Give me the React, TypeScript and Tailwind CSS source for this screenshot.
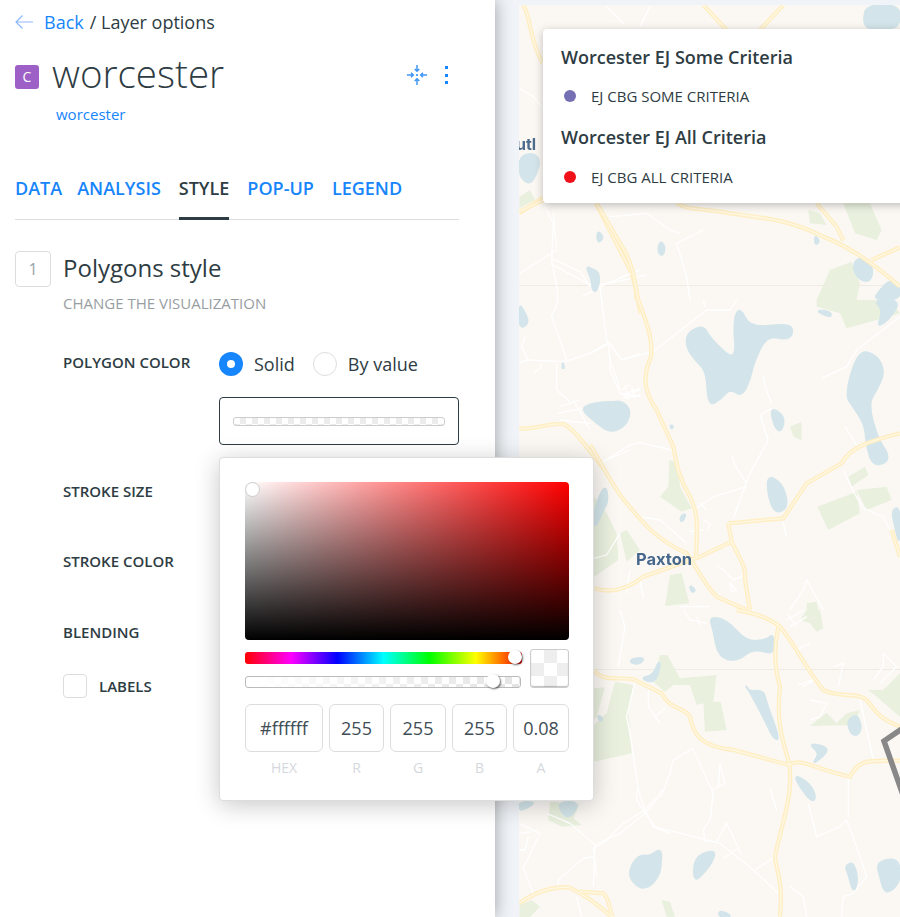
const ROAD_OUTER = '#ffeec3'
const ROAD_INNER = '#fff8e4'
const WATER = '#d3e5ea'
const GREEN = '#e9f0de'

interface CropShapes {
  x: number
  y: number
  water?: string[]
  green?: string[]
  minor?: string[]
  roads?: string[]
}

// map pieces, traced in 3x coordinates from an origin on the page
const MAP_PIECES: CropShapes[] = [
  {
    x: 490, y: 0,
    water: [
      'M1130 15 L1230 15 L1230 80 L1180 90 L1130 85 L1120 60 Z',
      'M88 470 L130 458 L150 480 L140 520 L120 555 L88 530 Z',
      'M325 692 L340 712 L328 728 L320 715 Z',
      'M510 722 L526 740 L518 770 L503 755 Z',
      'M290 800 L305 808 L325 815 L328 850 L315 875 L305 840 Z',
      'M1095 780 L1130 770 L1150 810 L1140 845 L1110 840 L1090 810 Z',
      'M1200 840 L1230 850 L1230 900 L1150 900 L1170 870 Z',
      'M975 705 L990 725 L975 735 Z',
    ],
    green: [
      'M955 630 L990 640 L1010 675 L960 670 Z',
      'M1060 610 L1140 610 L1175 690 L1160 720 L1095 700 Z',
      'M1020 810 L1085 785 L1110 850 L1100 900 L980 900 Z',
      'M88 590 L120 570 L135 600 L88 625 Z',
    ],
    minor: [
      'M88 265 L130 290 L155 320',
      'M640 690 L560 730 L590 830 L600 900',
      'M360 650 L470 640 L540 690 L570 700',
      'M190 640 L200 750 L90 820',
      'M1100 560 L1230 560',
      'M180 790 L310 860 L470 825',
      'M350 20 L400 70',
      'M480 20 L450 80',
    ],
    roads: [
      'M100 15 C125 60 115 110 158 190',
      'M640 15 L710 90',
      'M880 15 L810 90',
      'M88 640 L160 592',
      'M318 610 L420 810 C435 845 440 870 440 900',
      'M560 610 C590 630 640 625 720 640 C830 655 900 660 1000 710 C1090 745 1160 800 1230 860',
      'M980 610 L1040 680 L1060 722',
      'M1145 780 L1230 742',
    ],
  },
  {
    x: 510, y: 200,
    water: [
      'M262 95 L281 113 L265 127 Z',
      'M228 200 L245 205 L255 225 L265 215 L268 250 L258 275 L247 270 L245 235 Z',
      'M28 312 L40 330 L58 368 L28 388 Z',
      'M158 485 L163 505 L157 505 Z',
      'M213 628 L240 612 L275 608 L285 615 L330 600 L360 625 L355 665 L305 700 L260 670 Z',
    ],
    minor: [
      'M105 20 L130 70 L125 180 L142 270 L142 310 L125 350 L150 420 L170 480',
      'M125 175 L210 215 L240 260',
      'M218 288 L270 262 L290 420 L335 480 L390 460',
      'M28 490 L50 480 L165 485 L240 460 L295 428',
      'M45 410 L35 440 L55 480',
      'M95 490 L90 505 L70 520',
      'M140 490 L140 570 L180 605',
      'M150 620 L210 600 M145 640 L215 625 M150 660 L240 670 M190 600 L240 690',
      'M295 430 L300 480 L325 550 L330 580 L390 590',
      'M335 570 L360 555 M340 590 L390 570',
      'M270 260 L340 230 L390 210',
      'M290 780 L360 750',
    ],
    roads: [
      'M28 35 L100 0',
      'M260 10 L345 155 C375 210 375 260 392 340',
      'M28 685 C70 690 110 670 160 672 C200 690 240 760 285 810',
    ],
  },
  {
    x: 590, y: 300,
    water: [
      'M290 100 L340 75 L360 115 L440 190 L430 60 L450 20 L480 85 L600 70 L610 100 L590 120 L530 105 L490 190 L480 240 L455 290 L420 265 L395 295 L355 320 L350 215 L320 185 L290 145 Z',
      'M805 150 L860 165 L885 215 L860 270 L835 310 L860 410 L905 480 L850 500 L830 440 L825 375 L790 320 L765 285 Z',
      'M0 312 L80 302 L120 330 L110 375 L60 400 L0 350 Z',
      'M540 320 L585 350 L575 395 L555 385 Z',
      'M532 525 L575 550 L592 600 L585 630 L555 638 L535 590 Z',
      'M850 0 L930 0 L905 50 L860 85 L880 30 Z',
      'M680 30 L720 35 L725 50 L700 45 Z',
      'M12 630 L45 550 L55 600 L40 630 L12 690 Z',
      'M275 645 L288 642 L278 665 L270 660 Z',
      'M240 375 L250 378 L245 388 Z',
      'M298 855 L318 870 L305 878 Z',
      'M905 630 L930 620 L930 740 L915 680 Z',
    ],
    green: [
      'M680 0 L900 0 L930 40 L860 60 L770 85 L750 40 L680 20 Z',
      'M600 380 L635 365 L635 420 L612 412 Z',
      'M238 480 L265 490 L270 560 L305 625 L275 635 L210 590 L235 560 Z',
      'M12 590 L50 640 L80 700 L85 780 L12 830 Z',
      'M90 700 L110 690 L150 750 L110 785 Z',
      'M775 530 L825 500 L835 525 L785 560 Z',
      'M682 620 L800 575 L810 640 L715 690 Z',
      'M800 570 L890 560 L905 600 L830 630 Z',
      'M240 825 L275 820 L298 910 L225 918 Z',
      'M650 910 L680 905 L685 930 L650 930 Z',
    ],
    minor: [
      'M0 160 L60 130 L95 180 L190 155 L350 30 L420 30 L440 0',
      'M340 0 L345 20',
      'M60 170 L60 210 L85 270',
      'M95 285 L150 265 M100 295 L150 285 M105 255 L115 300 M125 260 L135 295',
      'M40 485 L120 435 L150 428 L245 450',
      'M520 225 L525 260 L545 310',
      'M510 345 L545 325 M510 345 L535 420 L480 520 L430 655',
      'M425 465 L435 495 L470 550',
      'M470 560 L370 590 L320 625 M330 610 L350 630',
      'M695 235 L770 200 L800 150 L930 50',
      'M765 380 L800 435',
      'M760 510 L790 575 L820 625 L880 650 L900 690',
      'M578 665 L590 710',
      'M340 660 L360 670 L355 690 M300 695 L340 690',
      'M150 650 L210 660 L290 730',
      'M90 700 L50 765 L12 775',
      'M120 810 L110 880 M150 840 L160 895 M380 795 L400 810 L430 840 L455 830',
      'M420 850 L440 870 L425 875 Z',
      'M600 930 L640 870 L650 840 L700 930',
      'M270 920 L360 920',
    ],
    roads: [
      'M145 0 C165 60 190 110 183 170 C155 235 165 280 200 330 L250 440 C260 500 270 540 300 590 C330 650 320 700 318 770',
      'M0 435 C30 480 60 550 110 610 C160 670 200 720 290 760 C320 800 340 850 380 890 L470 930',
      'M12 865 C60 880 110 870 160 830 L330 770 L425 725',
      'M415 670 L425 725 C450 780 470 800 465 840 L480 930',
      'M415 670 L580 655 L650 550 L755 490 C780 440 850 420 930 400',
      'M905 690 L930 770',
    ],
  },
  {
    x: 590, y: 610,
    water: [
      'M358 20 L410 30 L470 95 L530 90 L550 70 L555 135 L490 115 L440 155 L385 140 L370 60 Z',
      'M120 148 L165 142 L150 162 L125 160 Z',
      'M150 205 L190 195 L205 155 L212 165 L195 220 Z',
      'M465 220 L475 245 L520 240 L530 280 L570 390 L550 385 L520 320 Z',
      'M770 335 L800 310 L815 350 L805 375 L785 375 Z',
      'M655 400 L710 410 L710 430 L665 465 L690 430 Z',
      'M605 490 L660 520 L680 565 L660 575 Z',
      'M115 785 L145 735 L190 740 L210 715 L215 790 L165 845 Z',
      'M310 770 L325 735 L375 720 L370 750 L345 785 L315 815 Z',
      'M765 770 L790 755 L805 810 L790 850 L775 790 Z',
      'M860 760 L905 745 L930 760 L930 820 L885 855 L870 800 Z',
      'M390 900 L430 920 L385 920 Z',
      'M22 315 L40 325 L30 335 Z',
    ],
    green: [
      'M210 135 L232 135 L270 205 L380 195 L370 275 L392 275 L410 360 L345 365 L340 280 L320 285 L300 225 L250 225 L225 245 L190 215 Z',
      'M12 235 L45 232 L20 320 L12 330 Z',
      'M75 215 L130 225 L115 305 L125 430 L12 455 L12 345 L50 310 Z',
      'M630 30 L650 0 L690 0 L700 55 L680 65 L660 40 Z',
      'M660 348 L710 308 L740 340 L770 310 L810 300 L790 345 Z',
      'M835 240 L880 240 L930 190 L930 320 L860 260 Z',
      'M215 870 L240 875 L255 920 L230 920 Z',
    ],
    minor: [
      'M90 0 L105 50 L85 170',
      'M280 0 L300 30 L350 40 M320 20 L330 45',
      'M590 30 L640 0 M600 50 L650 20 M620 50 L590 10',
      'M610 125 L660 100',
      'M175 240 L175 290 L210 340 M195 320 L225 295',
      'M135 215 L110 320 L125 400 L145 540 L165 600',
      'M165 600 L190 650 L290 675 L390 700 L490 780 L565 850',
      'M165 600 L100 640 L40 700 L10 715 L20 800',
      'M165 600 L190 570 L215 555 L240 490 L250 450 L310 415',
      'M310 420 L370 550 L360 630 L340 660 L345 695',
      'M365 540 L405 520 L390 460 L385 530',
      'M380 695 L410 640 L455 735 M400 745 L445 715',
      'M495 780 L555 740',
      'M655 580 L680 680 L750 650 L770 630 L810 740 L830 800 L790 850 L760 860 L755 920',
      'M540 535 L560 600',
      'M730 170 L760 160 L745 230 M640 230 L680 205 L625 225',
      'M660 270 L710 280 L690 320 L660 330',
      'M810 270 L850 450',
      'M850 210 L880 170 L880 130 L920 170 L870 220',
      'M600 830 L640 860 L650 920',
      'M775 500 L775 620',
    ],
    roads: [
      'M440 0 C500 10 540 25 570 50 C620 110 650 180 700 240 C750 265 800 245 830 270 C860 310 870 325 930 350',
      'M565 50 C550 120 555 180 570 230 C560 320 570 370 598 460 C610 560 580 620 555 740 C560 790 580 810 570 920',
      'M12 180 C35 215 80 200 130 208 L215 250 C240 300 280 290 300 320 C310 380 340 410 430 420 L598 465 C630 440 680 480 780 500 C810 440 850 455 930 452',
    ],
  },
  {
    x: 490, y: 790,
    water: [
      'M205 36 L270 36 L240 85 L215 70 Z',
      'M88 36 L140 36 L100 60 L88 58 Z',
      'M415 245 L445 195 L480 200 L510 175 L518 210 L480 265 L465 300 L430 280 Z',
    ],
    green: [
      'M88 345 L125 330 L150 350 L120 381 L88 381 Z',
      'M180 36 L205 36 L230 60 L270 40 L250 85 L275 105 L215 110 L175 90 Z',
      'M515 330 L540 340 L540 381 L530 375 Z',
    ],
    minor: [
      'M88 100 L150 130 L100 235 L130 310',
      'M170 70 L240 100 L315 165 L310 290',
      'M315 165 L390 130 L465 70 L440 30 L440 0',
      'M465 70 L500 115 L540 130 M465 70 L500 30 L515 0',
      'M310 200 L280 205 L205 270 L205 290',
      'M88 130 L125 125 M88 180 L105 180 L115 140',
      'M260 320 L275 381',
    ],
    roads: [
      'M88 340 C130 310 180 290 235 292 C280 310 330 350 365 381',
      'M270 305 L340 310 C360 330 355 350 368 381',
    ],
  },
]

// rounds a traced polygon so lakes don't look cut with scissors
function smoothOutline(d: string) {
  const nums = d.match(/-?\d+(\.\d+)?/g)!.map(Number)
  const pts: [number, number][] = []
  for (let i = 0; i < nums.length; i += 2) pts.push([nums[i], nums[i + 1]])
  const mid = (a: [number, number], b: [number, number]) => `${(a[0] + b[0]) / 2} ${(a[1] + b[1]) / 2}`
  let out = `M${mid(pts[pts.length - 1], pts[0])}`
  pts.forEach((p, i) => {
    out += ` Q${p[0]} ${p[1]} ${mid(p, pts[(i + 1) % pts.length])}`
  })
  return out + ' Z'
}

function MapCrop({ x, y, water = [], green = [], minor = [], roads = [] }: CropShapes) {
  return (
    <g transform={`translate(${x} ${y}) scale(0.3333)`}>
      {green.map((d, i) => <path key={i} d={d} fill={GREEN} />)}
      {minor.map((d, i) => <path key={i} d={d} fill="none" stroke="#ffffff" strokeWidth={4} />)}
      {water.map((d, i) => <path key={i} d={smoothOutline(d)} fill={WATER} strokeLinejoin="round" stroke={WATER} strokeWidth={6} />)}
      {roads.map((d, i) => <path key={i} d={d} fill="none" stroke={ROAD_OUTER} strokeWidth={13} />)}
      {roads.map((d, i) => <path key={i} d={d} fill="none" stroke={ROAD_INNER} strokeWidth={4} />)}
    </g>
  )
}

function MapBackdrop() {
  return (
    <svg viewBox="519 5 381 912" className="block h-[912px] w-[381px] blur-[0.6px]">
      <rect x="519" y="5" width="381" height="912" fill="#fbf8f4" />
      <path d="M519 285.5 H900 M519 669.5 H900" stroke="#efebe5" strokeWidth="1" />
      {MAP_PIECES.map(p => <MapCrop key={`${p.x}-${p.y}`} {...p} />)}
      <path d="M903 728 L884 741 L903 795" fill="none" stroke="#888888" strokeWidth="5.5" />
      <text x="516" y="150" fill="#4d6b8c" fontSize="16" fontWeight="700" fontFamily="Inter, sans-serif">utl</text>
      <text x="636" y="565" fill="#46678c" fontSize="16.5" fontWeight="700" fontFamily="Inter, sans-serif">Paxton</text>
    </svg>
  )
}

function CollapseIcon() {
  return (
    <svg width="22" height="22" viewBox="0 0 24 24" fill="none" stroke="#3f95f5" strokeWidth="1.6">
      <path d="M12 1 V8 M9.5 5.5 L12 8 L14.5 5.5" />
      <path d="M12 23 V16 M9.5 18.5 L12 16 L14.5 18.5" />
      <path d="M1 12 H8 M5.5 9.5 L8 12 L5.5 14.5" />
      <path d="M23 12 H16 M18.5 9.5 L16 12 L18.5 14.5" />
      <rect x="11" y="11" width="2" height="2" fill="#3f95f5" stroke="none" />
    </svg>
  )
}

const TABS = ['DATA', 'ANALYSIS', 'STYLE', 'POP-UP', 'LEGEND']
const FIELDS = [
  { value: '#ffffff', label: 'HEX', width: 'w-[78px]' },
  { value: '255', label: 'R', width: 'w-[55px]' },
  { value: '255', label: 'G', width: 'w-[56px]' },
  { value: '255', label: 'B', width: 'w-[55px]' },
  { value: '0.08', label: 'A', width: 'w-[56px]' },
]

function ColorPicker() {
  return (
    <div className="absolute left-[219px] top-[457px] z-20 h-[344px] w-[375px] rounded border border-[#dddddd] bg-white pl-[25px] pr-[24px] pt-[24px] shadow-[0_4px_24px_rgba(0,0,0,0.22)]">
      <div className="relative h-[158px] w-[324px] rounded bg-[linear-gradient(to_top,#000,transparent),linear-gradient(to_right,#fff,#f00)]">
        <span className="absolute left-0 top-0 h-[15px] w-[15px] rounded-full border border-[#cccccc] bg-white" />
      </div>
      <div className="mt-[9px] flex gap-[9px]">
        <div className="w-[276px] pt-[3px]">
          <div className="relative h-3 w-[277px] rounded-[3px] bg-[linear-gradient(to_right,#f00,#f0f,#00f,#0ff,#0f0,#ff0,#f00)]">
            <span className="absolute left-[263px] top-[-2px] h-[14px] w-[14px] rounded-full bg-white shadow-[1px_1px_2px_rgba(0,0,0,0.6)]" />
          </div>
          <div className="relative mt-3 h-3 w-[276px] rounded-[3px] border border-[#bbbbbb] bg-[linear-gradient(to_right,#fff,transparent),repeating-conic-gradient(#e4e4e4_0_25%,#fff_0_50%)] bg-size-[100%_100%,14px_14px]">
            <span className="absolute left-[240px] top-[-3px] h-[14px] w-[14px] rounded-full bg-white shadow-[1px_1px_2px_rgba(0,0,0,0.6)]" />
          </div>
        </div>
        <div className="h-[39px] w-[39px] rounded-[3px] border border-[#cccccc] bg-[repeating-conic-gradient(#eeeeee_0_25%,#fff_0_50%)] bg-size-[26px_26px] shadow-[inset_0_-1px_1px_rgba(0,0,0,0.25)]" />
      </div>
      <div className="mt-4 flex gap-[6px]">
        {FIELDS.map(f => (
          <div key={f.label} className={`${f.width} flex flex-col items-center`}>
            <div className="flex h-12 w-full items-center justify-center rounded-md border border-[#dddddd] text-lg text-[#3f4d55]">{f.value}</div>
            <div className="mt-[6px] text-sm leading-5 text-[#d5d9dd]">{f.label}</div>
          </div>
        ))}
      </div>
    </div>
  )
}

function Legend() {
  return (
    <div className="absolute left-[543px] top-[29px] z-10 h-[174px] w-[400px] rounded bg-white pl-[18px] pt-[14px] text-[#2e3c43] shadow-[0_2px_8px_rgba(0,0,0,0.25)]">
      <h3 className="text-lg font-semibold leading-7">Worcester EJ Some Criteria</h3>
      <div className="mt-[15px] flex h-5 items-center">
        <span className="ml-[3px] h-3 w-3 rounded-full bg-[#7570b3]" />
        <span className="ml-[15px] text-[15px]">EJ CBG SOME CRITERIA</span>
      </div>
      <h3 className="mt-[17px] text-lg font-semibold leading-7">Worcester EJ All Criteria</h3>
      <div className="mt-4 flex h-5 items-center">
        <span className="ml-[3px] h-3 w-3 rounded-full bg-[#f11119]" />
        <span className="ml-[15px] text-[15px]">EJ CBG ALL CRITERIA</span>
      </div>
    </div>
  )
}

export default function App() {
  return (
    <div className="relative flex h-[917px] w-[900px] overflow-hidden bg-[#f0f4f8] font-['Open_Sans',sans-serif] text-[#2e3c43]">
      {/* Layer options panel */}
      <div className="relative z-10 h-full w-[495px] shrink-0 bg-white pl-[15px] pr-[36px] pt-[10px] shadow-[0_0_16px_rgba(0,0,0,0.35)]">
        <div className="flex h-6 items-center text-lg">
          <svg width="18" height="14" viewBox="0 0 18 14" fill="none" stroke="#8db8fb" strokeWidth="1.2">
            <path d="M18 7 H1 M7.5 .5 L1 7 L7.5 13.5" />
          </svg>
          <span className="ml-[11px] text-[#1785fb]">Back</span>
          <span className="ml-[6px]">/ Layer options</span>
        </div>

        <div className="mt-[18px] flex h-[50px] items-center">
          <div className="flex h-6 w-6 items-center justify-center rounded-[3px] bg-[#9d60c6] text-sm text-white">C</div>
          <div className="ml-[13px] pb-[9px] text-[38.6px] font-light leading-[50px]">worcester</div>
          <div className="ml-auto mb-[4px] mr-[11px] flex items-center">
            <CollapseIcon />
            <div className="ml-[17px] flex flex-col gap-[4.5px]">
              <span className="h-[3px] w-[3px] bg-[#1785fb]" />
              <span className="h-[3px] w-[3px] bg-[#1785fb]" />
              <span className="h-[3px] w-[3px] bg-[#1785fb]" />
            </div>
          </div>
        </div>
        <div className="ml-[41px] mt-[2px] text-[15px] leading-5 text-[#1785fb]">worcester</div>

        <div className="mt-[50px] flex h-[46px] gap-[18px] border-b border-[#dddddd] text-lg font-semibold">
          {TABS.map(t => (
            <div key={t} className={t === 'STYLE' ? 'h-[46px] border-b-[3px] border-[#2e3c43]' : t === 'DATA' ? '-mr-[3px] text-[#1785fb]' : 'text-[#1785fb]'}>{t}</div>
          ))}
        </div>

        <div className="mt-[31px] flex">
          <div className="flex h-9 w-9 items-center justify-center rounded border border-[#dddddd] text-base text-[#9aa3a8]">1</div>
          <div className="ml-3">
            <div className="text-2xl leading-[34px]">Polygons style</div>
            <div className="mt-2 text-[15px] leading-5 text-[#979ea2]">CHANGE THE VISUALIZATION</div>
          </div>
        </div>

        <div className="ml-[48px] mt-[39px] flex h-6 items-center">
          <div className="mb-[3px] w-[156px] text-[15px] font-semibold">POLYGON COLOR</div>
          <span className="flex h-6 w-6 items-center justify-center rounded-full bg-[#1785fb]">
            <span className="h-2 w-2 rounded-full bg-white" />
          </span>
          <span className="ml-[11px] text-lg">Solid</span>
          <span className="ml-[18px] h-6 w-6 rounded-full border border-[#dddddd]" />
          <span className="ml-[11px] text-lg">By value</span>
        </div>
        <div className="ml-[204px] mt-[21px] flex h-12 w-60 items-center rounded border border-[#2e3c43] px-[13px]">
          <div className="h-[9px] w-full rounded-[3px] border border-[#cccccc] bg-[repeating-conic-gradient(#ececec_0_25%,#fff_0_50%)] bg-size-[12px_12px]" />
        </div>

        <div className="ml-[48px] mt-[36px] text-[15px] font-semibold leading-5">STROKE SIZE</div>
        <div className="ml-[48px] mt-[50px] text-[15px] font-semibold leading-5">STROKE COLOR</div>
        <div className="ml-[48px] mt-[51px] text-[15px] font-semibold leading-5">BLENDING</div>
        <div className="ml-[48px] mt-[32px] flex items-center">
          <span className="h-6 w-6 rounded border border-[#dddddd]" />
          <span className="ml-3 text-[15px] font-semibold">LABELS</span>
        </div>
      </div>

      <ColorPicker />

      {/* Map */}
      <div className="pl-[24px] pt-[5px]">
        <MapBackdrop />
      </div>
      <Legend />
    </div>
  )
}
